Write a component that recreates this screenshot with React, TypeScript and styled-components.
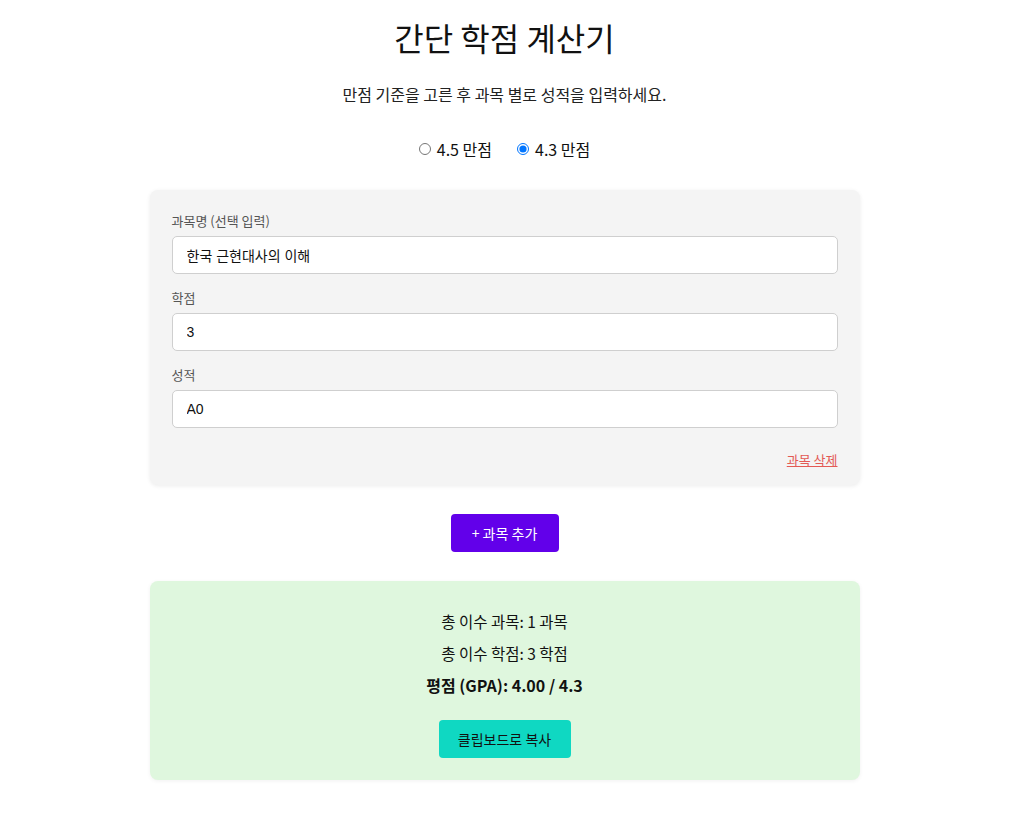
import { FC, useState } from "react"
import styled, { createGlobalStyle } from "styled-components"

const GlobalStyle = createGlobalStyle`
  html, body {
    margin: 0;
    padding: 0;
    background: #ffffff;
  }
  html {
    /* room the original page gave to its scrollbar */
    padding-right: 15px;
  }
  body {
    font-family: "Noto Sans CJK KR", "Liberation Sans", sans-serif;
    color: #111;
  }
`

// #region styled
const Page = styled.main`
  max-width: 710px;
  margin: 0 auto;
  padding: 16px 0 50px;
  display: flex;
  flex-direction: column;
  align-items: stretch;
`

const Title = styled.h1`
  margin: 0;
  font-size: 32px;
  line-height: 42px;
  font-weight: 400;
  text-align: center;
  color: #111;
`

const Subtitle = styled.p`
  margin: 24px 0 0;
  font-size: 16px;
  line-height: 24px;
  text-align: center;
  color: #222;
`

const ScaleRow = styled.div`
  margin-top: 31px;
  display: flex;
  justify-content: center;
  gap: 25px;
  font-size: 16px;
  line-height: 24px;
`

const ScaleOption = styled.label`
  display: flex;
  align-items: center;
  gap: 6px;
  cursor: pointer;

  input {
    margin: 0;
    width: 12px;
    height: 12px;
  }
`

const Card = styled.section`
  margin-top: 29px;
  background: #f4f4f4;
  border-radius: 8px;
  padding: 22px 22px 16px;
  box-shadow: 0 1px 4px rgba(0, 0, 0, 0.08);
  display: flex;
  flex-direction: column;
`

const Field = styled.div`
  display: flex;
  flex-direction: column;
  gap: 6px;

  & + & {
    margin-top: 15px;
  }
`

const Label = styled.label`
  font-size: 13px;
  line-height: 18px;
  color: #555;
`

const Input = styled.input`
  box-sizing: border-box;
  height: 38px;
  padding: 0 14px;
  border: 1px solid #cfcfcf;
  border-radius: 5px;
  background: #fff;
  font-family: "Liberation Sans", "Noto Sans CJK KR", sans-serif;
  font-size: 14px;
  color: #111;
  outline: none;
`

const DeleteRow = styled.div`
  margin-top: 23px;
  display: flex;
  justify-content: flex-end;
`

const DeleteLink = styled.button`
  border: none;
  background: none;
  padding: 0;
  font-family: inherit;
  font-size: 13px;
  line-height: 18px;
  color: #e35a55;
  text-decoration: underline;
  cursor: pointer;
`

const Center = styled.div<{ $top: number }>`
  display: flex;
  justify-content: center;
  margin-top: ${({ $top }) => $top}px;
`

const Button = styled.button<{ $bg: string; $fg: string; $w: number }>`
  box-sizing: border-box;
  width: ${({ $w }) => $w}px;
  height: 38px;
  border: none;
  border-radius: 4px;
  background: ${({ $bg }) => $bg};
  color: ${({ $fg }) => $fg};
  font-family: inherit;
  font-size: 14px;
  cursor: pointer;
`

const Result = styled.section`
  margin-top: 29px;
  background: #dff7de;
  border-radius: 8px;
  padding: 29px 22px 22px;
  box-shadow: 0 1px 4px rgba(0, 0, 0, 0.06);
  display: flex;
  flex-direction: column;
  align-items: center;
`

const ResultLine = styled.p<{ $bold?: boolean }>`
  margin: 0;
  font-size: ${({ $bold }) => ($bold ? 16 : 15.5)}px;
  line-height: 22px;
  font-weight: ${({ $bold }) => ($bold ? 700 : 400)};
  color: #111;

  & + & {
    margin-top: 10px;
  }
`
// #endregion

const App: FC = () => {
  const [scale, setScale] = useState<"4.5" | "4.3">("4.3")
  const [name, setName] = useState("한국 근현대사의 이해")
  const [credit, setCredit] = useState("3")
  const [grade, setGrade] = useState("A0")

  return (
    <>
      <GlobalStyle />
      <Page>
        <Title>간단 학점 계산기</Title>
        <Subtitle>만점 기준을 고른 후 과목 별로 성적을 입력하세요.</Subtitle>
        <ScaleRow>
          <ScaleOption>
            <input type="radio" name="scale" checked={scale === "4.5"} onChange={() => setScale("4.5")} />
            4.5 만점
          </ScaleOption>
          <ScaleOption>
            <input type="radio" name="scale" checked={scale === "4.3"} onChange={() => setScale("4.3")} />
            4.3 만점
          </ScaleOption>
        </ScaleRow>

        <Card>
          <Field>
            <Label>과목명 (선택 입력)</Label>
            <Input value={name} onChange={(e) => setName(e.target.value)} />
          </Field>
          <Field>
            <Label>학점</Label>
            <Input value={credit} onChange={(e) => setCredit(e.target.value)} />
          </Field>
          <Field>
            <Label>성적</Label>
            <Input value={grade} onChange={(e) => setGrade(e.target.value)} />
          </Field>
          <DeleteRow>
            <DeleteLink>과목 삭제</DeleteLink>
          </DeleteRow>
        </Card>

        <Center $top={29}>
          <Button $bg="#6200ea" $fg="#fff" $w={108}>+ 과목 추가</Button>
        </Center>

        <Result>
          <ResultLine>총 이수 과목: 1 과목</ResultLine>
          <ResultLine>총 이수 학점: 3 학점</ResultLine>
          <ResultLine $bold>평점 (GPA): 4.00 / 4.3</ResultLine>
          <Center $top={24}>
            <Button $bg="#0fd8c2" $fg="#111" $w={132}>클립보드로 복사</Button>
          </Center>
        </Result>
      </Page>
    </>
  )
}

export default App
